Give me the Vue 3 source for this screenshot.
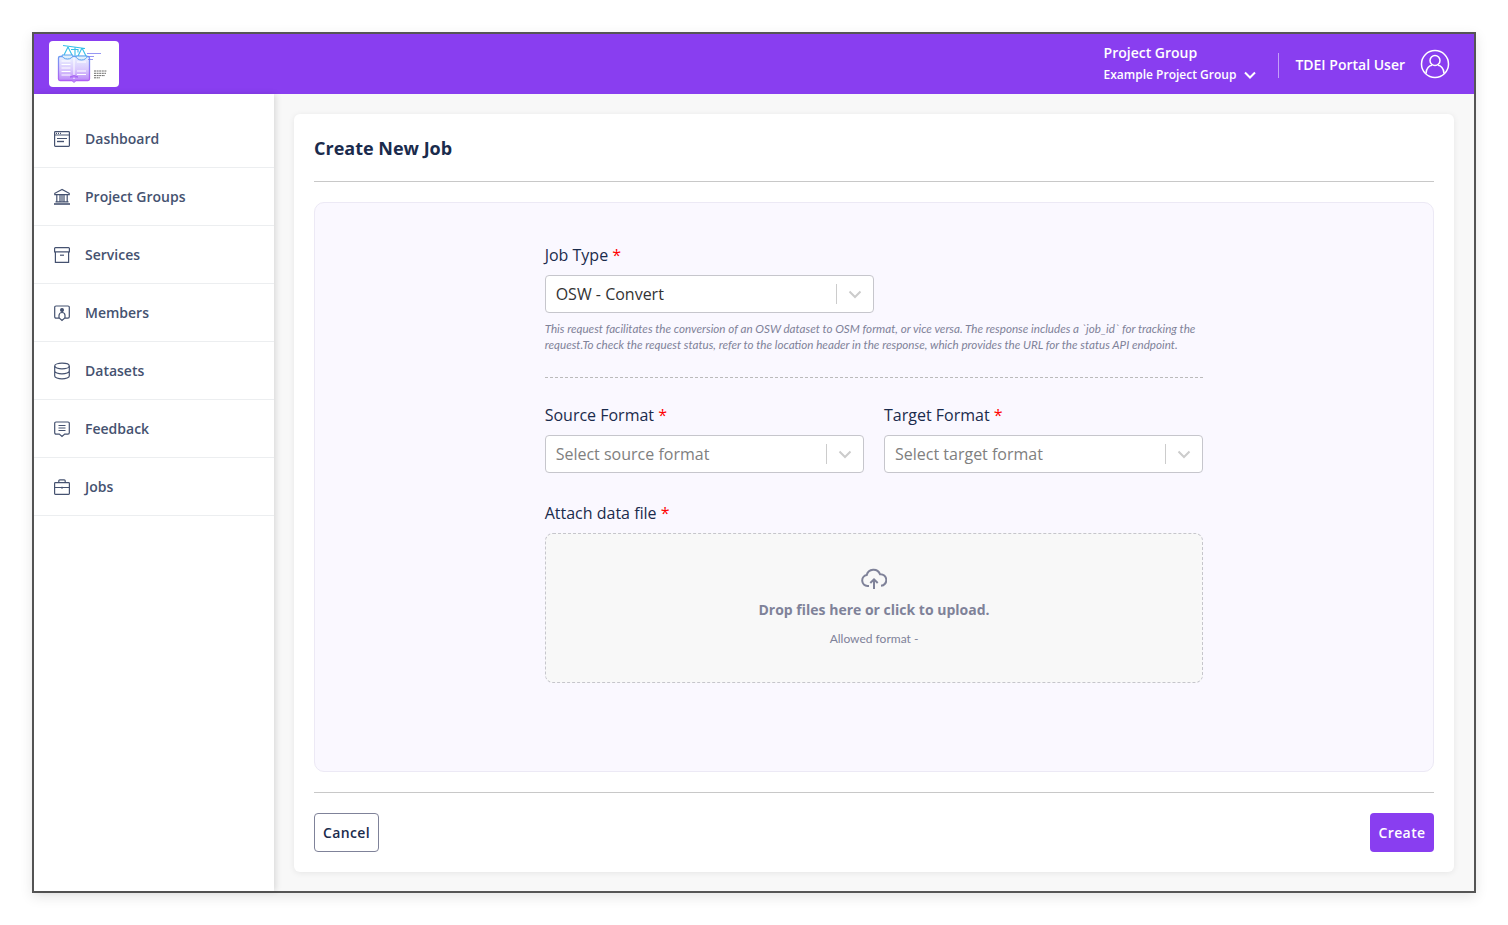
<script setup>
const items = [
  { label: 'Dashboard', key: 'dash' },
  { label: 'Project Groups', key: 'bank' },
  { label: 'Services', key: 'box' },
  { label: 'Members', key: 'member' },
  { label: 'Datasets', key: 'db' },
  { label: 'Feedback', key: 'feedback' },
  { label: 'Jobs', key: 'jobs' },
]
</script>

<template>
  <div class="page">
    <div class="frame">
      <header class="topbar">
        <div class="logo">
          <svg width="70" height="46" viewBox="0 0 70 46" fill="none">
            <defs>
              <linearGradient id="lg" x1="0" y1="0" x2="0" y2="1">
                <stop offset="0" stop-color="#eaf3ff" />
                <stop offset="0.55" stop-color="#d9c8fd" />
                <stop offset="1" stop-color="#bb8af8" />
              </linearGradient>
              <linearGradient id="ls" x1="0" y1="0" x2="0" y2="1">
                <stop offset="0" stop-color="#6f9cf2" />
                <stop offset="1" stop-color="#b060f5" />
              </linearGradient>
            </defs>
            <rect x="9.500" y="15.500" width="31" height="24" rx="1.500" fill="url(#lg)" stroke="url(#ls)" stroke-width="1.300" />
            <path d="M25 16v22" stroke="#fff" stroke-width="1" />
            <path d="M12.500 20h9M12.500 23.500h9M12.500 27h9M12.500 30.500h9M12.500 34h9M28 21h9M28 30h9M28 33.500h9" stroke="#fff" stroke-width="1" />
            <path d="M14 4.500l22 3M19 6l-4 8M19 6l4 8M33 7l-4 8M33 7l4 8M26 6v9M22 8.500h7v3" stroke="#35bfe9" stroke-width="1.100" />
            <path d="M13 14a5.500 4 0 0 0 11 0zM27 15a5.500 4 0 0 0 11 0z" fill="#e2f0fc" stroke="#5aa3ee" stroke-width="1" />
            <path d="M21 36q4-3 8 0zM23 39.500l2 2 2-2" fill="#c79af8" stroke="#a765f4" stroke-width="1" />
            <path d="M38 12.500h14M39 15.500h6M39 18.500h5" stroke="#7c7cf0" stroke-width="0.800" />
            <path d="M45 30h13M45 32.300h12M45 34.600h11M45 36.800h6" stroke="#444" stroke-width="0.800" stroke-dasharray="2 0.600" />
          </svg>
        </div>
        <div class="top-right">
          <div class="group">
            <div class="group-title">Project Group</div>
            <div class="group-value">
              <span>Example Project Group</span>
              <svg class="group-chevron" width="12" height="8" viewBox="0 0 12 8" fill="none">
                <path d="M1 1.500l5 5 5-5" stroke="#fff" stroke-width="2" />
              </svg>
            </div>
          </div>
          <div class="divider"></div>
          <div class="user-name">TDEI Portal User</div>
          <svg class="user-icon" width="30" height="30" viewBox="0 0 30 30" fill="none" stroke="#fff" stroke-width="1.500">
            <circle cx="15" cy="15" r="13.500" />
            <circle cx="15" cy="11.500" r="5" />
            <path d="M6 24.500c0-5.500 3.500-8 6-8.300M24 24.500c0-5.500-3.500-8-6-8.300" />
          </svg>
        </div>
      </header>

      <div class="body">
        <nav class="sidebar">
          <a v-for="item in items" :key="item.key" class="nav-item">
            <svg class="nav-icon" width="18" height="18" viewBox="0 0 18 18" fill="none" stroke="#455270" stroke-width="1.200">
              <template v-if="item.key === 'dash'">
                <rect x="1.600" y="1.600" width="14.800" height="14.800" rx="0.800" />
                <path d="M1.600 5h14.800M4 8.500h10" />
                <path d="M4 11.500h7" stroke-width="1.400" />
                <path d="M3 3.300h1M5 3.300h1M7 3.300h1" />
              </template>
              <template v-else-if="item.key === 'bank'">
                <path d="M9 1.500L1.800 5.300v1.400h14.400V5.300zM3.800 7v6.500M7 7v6.500M11 7v6.500M14.200 7v6.500M2.500 13.800h13" />
                <path d="M9 7v6.500" />
                <path d="M1 16h16" stroke-width="1.600" />
              </template>
              <template v-else-if="item.key === 'box'">
                <path d="M1.600 5.800V2.400a0.800 0.800 0 0 1 .8-.8h13.200a0.800 0.800 0 0 1 .8.800v3.400zM2.400 5.800v10.600h13.200V5.800" />
                <path d="M7 9.200h4" />
              </template>
              <template v-else-if="item.key === 'member'">
                <path d="M3 2h12a1.300 1.300 0 0 1 1.300 1.300v9.500a1.300 1.300 0 0 1-1.300 1.300h-3.300L9 16.500l-2.700-2.400H3a1.300 1.300 0 0 1-1.300-1.300V3.300A1.300 1.300 0 0 1 3 2z" />
                <circle cx="9" cy="6" r="1.400" fill="#455270" />
                <path d="M6 14v-2.500a3 3 0 0 1 6 0V14" />
              </template>
              <template v-else-if="item.key === 'db'">
                <ellipse cx="9" cy="4" rx="7.300" ry="2.800" />
                <path d="M1.700 4v10c0 1.500 3.300 2.800 7.300 2.800s7.300-1.300 7.300-2.800V4M1.700 9c0 1.500 3.300 2.800 7.300 2.800s7.300-1.300 7.300-2.800" />
              </template>
              <template v-else-if="item.key === 'feedback'">
                <path d="M3 2h12a1.300 1.300 0 0 1 1.300 1.300v9.500a1.300 1.300 0 0 1-1.300 1.300h-3.300L9 16.500l-2.700-2.400H3a1.300 1.300 0 0 1-1.300-1.300V3.300A1.300 1.300 0 0 1 3 2z" />
                <path d="M5.500 5.500h7M5.500 8h7M5.500 10.500h7" />
              </template>
              <template v-else>
                <rect x="1.600" y="4.600" width="14.800" height="11.800" rx="0.800" />
                <path d="M5.800 4.600V2.800a1 1 0 0 1 1-1h4.400a1 1 0 0 1 1 1v1.800M1.600 9.500h14.800M9 8.700v2" />
              </template>
            </svg>
            <span class="nav-label">{{ item.label }}</span>
          </a>
        </nav>

        <main class="content">
          <section class="card">
            <h1 class="title">Create New Job</h1>
            <div class="panel">
              <form class="form" @submit.prevent>
                <label class="label">Job Type <span class="req">*</span></label>
                <div class="select half">
                  <span class="value">OSW - Convert</span>
                  <span class="sep"></span>
                  <svg class="chev" width="20" height="20" viewBox="0 0 20 20"><path d="M4.500 7.500L10 13l5.500-5.500" fill="none" stroke="#ccc" stroke-width="2" /></svg>
                </div>
                <p class="help">This request facilitates the conversion of an OSW dataset to OSM format, or vice versa. The response includes a `job_id` for tracking the request.To check the request status, refer to the location header in the response, which provides the URL for the status API endpoint.</p>
                <div class="dashed"></div>

                <div class="two">
                  <div>
                    <label class="label">Source Format <span class="req">*</span></label>
                    <div class="select">
                      <span class="placeholder">Select source format</span>
                      <span class="sep"></span>
                      <svg class="chev" width="20" height="20" viewBox="0 0 20 20"><path d="M4.500 7.500L10 13l5.500-5.500" fill="none" stroke="#ccc" stroke-width="2" /></svg>
                    </div>
                  </div>
                  <div>
                    <label class="label">Target Format <span class="req">*</span></label>
                    <div class="select">
                      <span class="placeholder">Select target format</span>
                      <span class="sep"></span>
                      <svg class="chev" width="20" height="20" viewBox="0 0 20 20"><path d="M4.500 7.500L10 13l5.500-5.500" fill="none" stroke="#ccc" stroke-width="2" /></svg>
                    </div>
                  </div>
                </div>

                <label class="label attach">Attach data file <span class="req">*</span></label>
                <div class="drop">
                  <svg width="26" height="22" viewBox="0 0 26 22" fill="none" stroke="#7f8299" stroke-width="2">
                    <path d="M8 18H6.500a5.500 5.500 0 0 1-.8-10.900A7 7 0 0 1 19 6.200a5.800 5.800 0 0 1 1 11.600" />
                    <path d="M13 21v-9.500M9.300 15L13 11.300 16.700 15" />
                  </svg>
                  <div class="drop-title">Drop files here or click to upload.</div>
                  <div class="drop-sub">Allowed format -</div>
                </div>
              </form>
            </div>
            <div class="footer">
              <button type="button" class="btn cancel">Cancel</button>
              <button type="button" class="btn create">Create</button>
            </div>
          </section>
        </main>
      </div>
    </div>
  </div>
</template>

<style>
html, body { margin: 0; background: #fff; }
</style>

<style scoped>
* { box-sizing: border-box; }
.page {
  width: 1508px;
  height: 925px;
  padding: 32px;
  font-family: "Open Sans", "Liberation Sans", sans-serif;
  overflow: hidden;
}
.frame {
  width: 1444px;
  height: 861px;
  border: 2px solid #555;
  display: flex;
  flex-direction: column;
  background: #f8f8f8;
  box-shadow: 0 4px 12px rgba(0, 0, 0, 0.1);
}
.topbar {
  height: 60px;
  flex: none;
  background: #893ef0;
  display: flex;
  align-items: center;
  justify-content: space-between;
  padding: 0 24px 0 15px;
  color: #fff;
}
.logo {
  width: 70px;
  height: 46px;
  background: #fff;
  border-radius: 4px;
}
.logo svg { display: block; }
.top-right { display: flex; align-items: center; }
.group { margin-right: 22px; margin-top: -3px; }
.group-title { font-size: 14px; font-weight: 600; line-height: 20px; }
.group-value {
  font-size: 12px;
  font-weight: 600;
  line-height: 16px;
  margin-top: 4px;
  display: flex;
  align-items: center;
}
.group-chevron { margin-left: 8px; }
.divider { width: 1px; height: 25px; background: rgba(255, 255, 255, 0.5); margin-top: 2px; }
.user-name { font-size: 14px; font-weight: 600; margin-left: 16px; }
.user-icon { margin-left: 15px; display: block; }
.body { flex: 1; display: flex; min-height: 0; }
.sidebar {
  width: 240px;
  flex: none;
  background: #fff;
  padding-top: 16px;
  box-shadow: 2px 0 6px rgba(0, 0, 0, 0.12);
}
.nav-item {
  height: 58px;
  display: flex;
  align-items: center;
  padding: 0 0 0 19px;
  border-bottom: 1px solid #eceef0;
  color: #455270;
}
.nav-icon { flex: none; margin-right: 14px; }
.nav-label { font-size: 14px; font-weight: 600; }
.content { flex: 1; padding: 20px 20px 19px; min-width: 0; }
.card {
  height: 100%;
  background: #fff;
  border-radius: 6px;
  padding: 20px;
  display: flex;
  flex-direction: column;
  box-shadow: 0 1px 6px rgba(0, 0, 0, 0.08);
}
.title {
  margin: 0;
  height: 48px;
  font-size: 18px;
  font-weight: 700;
  line-height: 28px;
  color: #1a2b4c;
  border-bottom: 1px solid #c8c8c8;
  flex: none;
}
.panel {
  flex: 1;
  margin-top: 20px;
  background: #faf8ff;
  border: 1px solid #ece9f5;
  border-radius: 10px;
  padding: 41px 0 0;
  min-height: 0;
}
.form { width: 658.67px; margin: 0 auto; }
.label {
  display: block;
  font-size: 16px;
  line-height: 22px;
  color: #1a2b4c;
  margin-bottom: 9px;
}
.req { color: #f00; }
.select {
  height: 38px;
  background: #fff;
  border: 1px solid #c6c6cc;
  border-radius: 4px;
  display: flex;
  align-items: center;
  padding-left: 10px;
  font-size: 16px;
}
.half { width: 50%; }
.value { flex: 1; color: #333; }
.placeholder { flex: 1; color: #808080; }
.sep { width: 1px; height: 20px; background: #ccc; }
.chev { margin: 0 8px; display: block; }
.help {
  margin: 8px 0 0;
  font-family: Lato, "Open Sans", sans-serif;
  font-size: 11.65px;
  font-style: italic;
  line-height: 16px;
  color: #7f8299;
}
.dashed { border-top: 1px dashed #bbb; margin-top: 24px; }
.two {
  display: grid;
  grid-template-columns: 1fr 1fr;
  gap: 20px;
  margin-top: 26px;
}
.attach { margin-top: 29px; }
.drop {
  height: 150px;
  border: 1px dashed #c6c6cc;
  border-radius: 8px;
  background: #f8f8f8;
  display: flex;
  flex-direction: column;
  align-items: center;
  padding-top: 34px;
}
.drop svg { display: block; }
.drop-title { font-size: 14px; font-weight: 700; color: #7f8299; line-height: 20px; margin-top: 10px; }
.drop-sub { font-family: Lato, "Open Sans", sans-serif; font-size: 12px; color: #7f8299; line-height: 16px; margin-top: 11px; }
.footer {
  flex: none;
  margin-top: 20px;
  padding-top: 20px;
  border-top: 1px solid #c8c8c8;
  display: flex;
  justify-content: space-between;
}
.btn {
  height: 39px;
  border-radius: 4px;
  font-family: inherit;
  font-size: 14px;
  font-weight: 600;
  letter-spacing: 0.4px;
  padding: 0;
}
.cancel { width: 65px; background: #fff; border: 1px solid #7f8299; color: #1a2b4c; }
.create { width: 64px; background: #893ef0; border: none; color: #fff; }
</style>
